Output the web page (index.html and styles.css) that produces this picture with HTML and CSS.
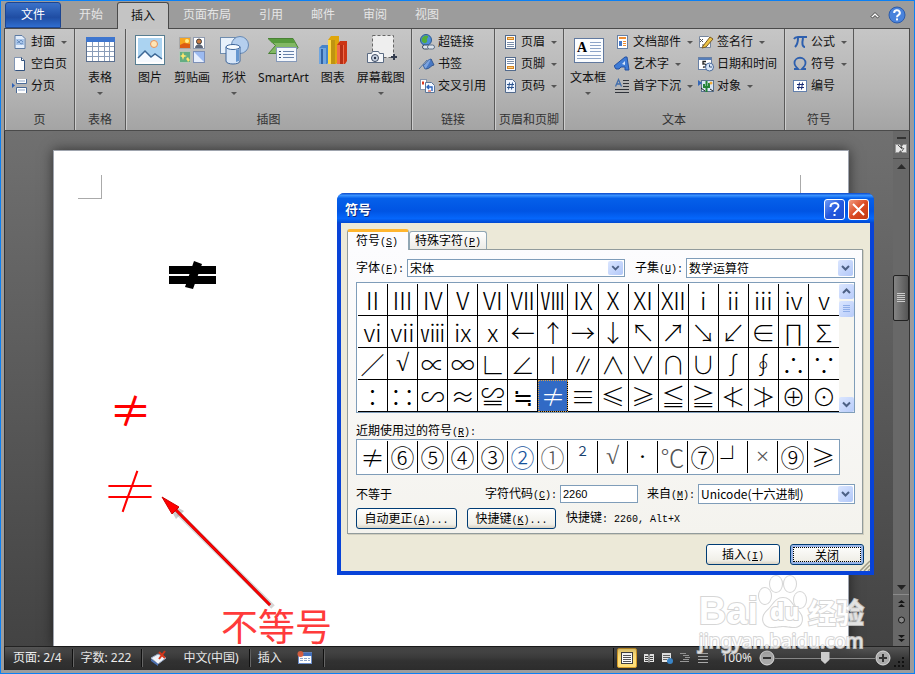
FILE: index.html
```html
<!DOCTYPE html>
<html lang="zh-CN">
<head>
    <meta charset="UTF-8">
    <title>插入符号</title>
    <link rel="stylesheet" href="styles.css">
</head>
<body>
    <div class="window">
        <nav class="tabs">
            <button type="button" class="tab file">文件</button>
            <button type="button" class="tab">开始</button>
            <button type="button" class="tab active">插入</button>
            <button type="button" class="tab">页面布局</button>
            <button type="button" class="tab">引用</button>
            <button type="button" class="tab">邮件</button>
            <button type="button" class="tab">审阅</button>
            <button type="button" class="tab">视图</button>
            <span class="spacer"></span>
            <button type="button" class="tool" aria-label="收起">
                <svg width="10" height="8" viewBox="0 0 10 8"><path d="M1 5.500 5 1.500 9 5.500 7.500 7 5 4.600 2.500 7z" fill="#fff" stroke="#444" stroke-width="1"/></svg>
            </button>
            <button type="button" class="tool" aria-label="帮助">
                <svg width="18" height="18" viewBox="0 0 18 18"><circle cx="9" cy="9" r="8" fill="#4a83dc" stroke="#2c5cab"/><path d="M6.200 7a2.800 2.600 0 1 1 4.200 2.100C9.400 9.700 9 10 9 11.200" fill="none" stroke="#fff" stroke-width="2"/><rect x="8" y="12.400" width="2" height="2" fill="#fff"/></svg>
            </button>
        </nav>

        <div class="ribbon">
            <section class="group pages">
                <div class="tools">
                    <div class="col">
                        <button type="button" class="item"><svg width="16" height="16" viewBox="0 0 16 16"><path d="M3 1.500h7l3 3v10H3z" fill="#e4eefb" stroke="#5d7ba3"/><rect x="4" y="5" width="8" height="6" fill="#a9c6ea"/><path d="M5 6l2 2 2-2 2 2M5 9l2-1 2 2 2-1" fill="none" stroke="#5b80b4" stroke-width=".8"/></svg>封面<i class="arrow"></i></button>
                        <button type="button" class="item"><svg width="16" height="16" viewBox="0 0 16 16"><path d="M2.500 1.500h7l3 3v10h-10z" fill="#fff" stroke="#8195b3"/><path d="M9.500 1.500v3h3v10h-9" fill="none" stroke="#33527d"/></svg>空白页</button>
                        <button type="button" class="item"><svg width="16" height="16" viewBox="0 0 16 16"><path d="M4.500 1v4.500h10V1M4.500 15V9.500h10V15" fill="#fff" stroke="#4b6b98"/><path d="M6 3h7M6 12h7" stroke="#91a9cb"/><path d="M0 5l3 2.500-3 2.500z" fill="#2d61b7"/></svg>分页</button>
                    </div>
                </div>
                <h2>页</h2>
            </section>
            <section class="group table">
                <div class="tools">
                    <button type="button" class="big"><svg width="32" height="32" viewBox="0 0 32 32"><rect x="2.500" y="3.500" width="28" height="24" fill="#fff" stroke="#5a6f8f"/><rect x="2" y="3" width="29" height="5" fill="#3e76cf"/><path d="M3 12.500h27M3 17.500h27M3 22.500h27M8.500 8v19M14.500 8v19M20.500 8v19M25.500 8v19" stroke="#8a9db9"/></svg><span>表格</span><i class="arrow"></i></button>
                </div>
                <h2>表格</h2>
            </section>
            <section class="group pictures">
                <div class="tools">
                    <button type="button" class="big"><svg width="32" height="32" viewBox="0 0 32 32"><rect x="1.500" y="1.500" width="29" height="29" fill="#fff" stroke="#577d91"/><rect x="4" y="4" width="24" height="24" fill="#abd3f1"/><circle cx="20" cy="10" r="3.500" fill="#ffe5b5" stroke="#e8915a"/><path d="M4 24l7-7 6 6 4-3 7 5v3H4z" fill="#f6faff"/><path d="M4 24l7-7 6 6 4-3 7 5" fill="none" stroke="#3c6795" stroke-width="1.500"/></svg><span>图片</span></button>
                    <button type="button" class="big"><svg width="32" height="32" viewBox="0 0 32 32"><rect x="3.500" y="3.500" width="11" height="11" fill="#f7a51e" stroke="#a8a8a8"/><path d="M4 11l4-2 6 1v4H4z" fill="#dc5c14"/><circle cx="11" cy="7" r="2" fill="#ffef8d"/><rect x="17.500" y="3.500" width="11" height="11" fill="#fff" stroke="#8f9bb0"/><circle cx="23" cy="7.500" r="2.500" fill="#c77a42" stroke="#3d3d3d"/><path d="M19 14c0-5 8-5 8 0z" fill="#5b6577"/><rect x="3.500" y="17.500" width="11" height="11" fill="#63ad82" stroke="#b3c7ba"/><path d="M7 18l1 3 3 1-3 1-1 3-1-3-2-1 2-1zM12 23l1 2 1 1-2 2-1-2-1-1z" fill="#ffe66e"/><rect x="17.500" y="17.500" width="11" height="11" fill="#9cbaf0" stroke="#7d90b7"/><path d="M18 18l10 10H18z" fill="#e7effd"/></svg><span>剪贴画</span></button>
                    <button type="button" class="big"><svg width="32" height="32" viewBox="0 0 32 32"><rect x="2.500" y="3.500" width="16" height="16" fill="#e8f1fb" stroke="#6f8cae"/><circle cx="22" cy="11" r="8.500" fill="#b5cfee" stroke="#6789b3"/><path d="M8 13v14c0 4 14 4 14 0V13z" fill="#d7e6f8" stroke="#3f679c"/><ellipse cx="15" cy="13" rx="7" ry="2.500" fill="#f8fcff" stroke="#3f679c"/><path d="M18 16v12l3-1V15z" fill="#6697d0"/></svg><span>形状</span><i class="arrow"></i></button>
                    <button type="button" class="big"><svg width="32" height="32" viewBox="0 0 32 32"><path d="M1 4.500h25l5 9-5 6H1.500l7-8z" fill="#82b864" stroke="#4a8235"/><path d="M2 5h24l2 4H5z" fill="#579b3d"/><rect x="9.500" y="13.500" width="20" height="14" fill="#f3f7fd" stroke="#8599b9"/><path d="M16 17.500h11M16 20.500h11M16 23.500h11" stroke="#6782aa"/><path d="M12 17.500h2M12 20.500h2M12 23.500h2" stroke="#344f79"/></svg><span>SmartArt</span></button>
                    <button type="button" class="big"><svg width="32" height="32" viewBox="0 0 32 32"><path d="M2 14l3-3h7v17l-2 2H2z" fill="#4684ca"/><path d="M2 14h7v16H2z" fill="#70a6df"/><path d="M4 15h2v15H4z" fill="#3263a3"/><path d="M11 6l3-4h8v25l-3 3h-8z" fill="#dfa60b"/><path d="M11 6h7v24h-7z" fill="#ffd946"/><path d="M14 6h4v24h-4z" fill="#bf9411"/><path d="M20 11l3-4h7v20l-2 3h-8z" fill="#cc3514"/><path d="M20 11h7v19h-7z" fill="#f06b49"/><path d="M23 11h3v19h-3z" fill="#b72e14"/></svg><span>图表</span></button>
                    <button type="button" class="big"><svg width="32" height="32" viewBox="0 0 32 32"><rect x="7.500" y="1.500" width="21" height="22" fill="#eee" stroke="#666" stroke-dasharray="3 2"/><path d="M26 23h6M29 20v6" stroke="#333b4d" stroke-width="2"/><path d="M2.500 19.500h4l1-2h6l1 2h4v9h-16z" fill="#f5f7fa" stroke="#5b6b83"/><circle cx="10" cy="24" r="3.500" fill="#c9d4e3" stroke="#3d4a61"/><circle cx="10" cy="24" r="1.200" fill="#273247"/></svg><span>屏幕截图</span><i class="arrow"></i></button>
                </div>
                <h2>插图</h2>
            </section>
            <section class="group links">
                <div class="tools">
                    <div class="col">
                        <button type="button" class="item"><svg width="16" height="16" viewBox="0 0 16 16"><circle cx="7" cy="6" r="5.500" fill="#4b8edc" stroke="#2e5a91"/><path d="M3 4c2-3 5-3 6-2s-2 3-1 4-1 4-3 3-3-2-2-5z" fill="#54ad3a"/><rect x="3.500" y="11" width="7" height="4" rx="2" fill="#dde4ec" stroke="#37485e"/><rect x="8.500" y="11" width="7" height="4" rx="2" fill="#dde4ec" stroke="#5c7087"/></svg>超链接</button>
                        <button type="button" class="item"><svg width="16" height="16" viewBox="0 0 16 16"><path d="M0 13L8 4" stroke="#58759d"/><path d="M4 9c3 0 3-5 8-6v5c-4 1-3 5-6 5z" fill="#7ba3e0" stroke="#3c65a3"/><path d="M12 3l3 6c-3 0-4 4-8 4" fill="#4778c4" stroke="#35578c"/></svg>书签</button>
                        <button type="button" class="item"><svg width="16" height="16" viewBox="0 0 16 16"><rect x="1.500" y="1.500" width="6" height="10" fill="#fff" stroke="#8695ac"/><path d="M3 3.500h2v3H3z" fill="#dc3b22"/><path d="M6.500 4.500h6l3 3v7h-9z" fill="#f3f8ff" stroke="#5b7699"/><path d="M13 13V9H8m2-2L8 9l2 2" fill="none" stroke="#2862bd" stroke-width="1.400"/><path d="M9 13h3" stroke="#dc3b22"/></svg>交叉引用</button>
                    </div>
                </div>
                <h2>链接</h2>
            </section>
            <section class="group header-footer">
                <div class="tools">
                    <div class="col">
                        <button type="button" class="item"><svg width="16" height="16" viewBox="0 0 16 16"><rect x="3.500" y="1.500" width="10" height="13" fill="#fff" stroke="#526a8c"/><rect x="5.500" y="3.500" width="6" height="2" fill="#f6cd87" stroke="#d78724"/><path d="M5 8.500h7M5 10.500h7M5 12.500h7" stroke="#7b8eaa"/></svg>页眉<i class="arrow"></i></button>
                        <button type="button" class="item"><svg width="16" height="16" viewBox="0 0 16 16"><rect x="3.500" y="1.500" width="10" height="13" fill="#fff" stroke="#526a8c"/><rect x="5.500" y="10.500" width="6" height="2" fill="#f6cd87" stroke="#d78724"/><path d="M5 3.500h7M5 5.500h7M5 7.500h7" stroke="#7b8eaa"/></svg>页脚<i class="arrow"></i></button>
                        <button type="button" class="item"><svg width="16" height="16" viewBox="0 0 16 16"><path d="M3.500 1.500h7l3 3v10h-10z" fill="#eff5ff" stroke="#526a8c"/><path d="M7.500 4.500l-1 7M10.500 4.500l-1 7M5 6.500h7M5 9.500h7" stroke="#2b548f"/></svg>页码<i class="arrow"></i></button>
                    </div>
                </div>
                <h2>页眉和页脚</h2>
            </section>
            <section class="group text">
                <div class="tools">
                    <button type="button" class="big"><svg width="32" height="32" viewBox="0 0 32 32"><rect x="2.500" y="4.500" width="29" height="24" fill="#fbfdff" stroke="#61799f"/><text x="5" y="18" class="icon-a">A</text><path d="M18 8.500h11M18 11.500h11M18 14.500h11M18 17.500h11M5 21.500h24M5 24.500h24" stroke="#8ea5c8"/></svg><span>文本框</span><i class="arrow"></i></button>
                    <div class="col">
                        <button type="button" class="item"><svg width="16" height="16" viewBox="0 0 16 16"><rect x="3.500" y="1.500" width="10" height="13" fill="#fff" stroke="#6680a6"/><rect x="5" y="3" width="7" height="2" fill="#ee8d33"/><path d="M5 7h3v5H5z" fill="#4578c8"/><path d="M9 7.500h3M9 9.500h3M9 11.500h3" stroke="#ee8d33"/></svg>文档部件<i class="arrow"></i></button>
                        <button type="button" class="item"><svg width="16" height="16" viewBox="0 0 16 16"><path d="M0 10L11 1h2l2 13h-4v-3H7l-2 2H2z" fill="#3e7bd6" stroke="#2450a0"/><path d="M8 8l3-3v4z" fill="#d8e6fa"/></svg>艺术字<i class="arrow"></i></button>
                        <button type="button" class="item"><svg width="16" height="16" viewBox="0 0 16 16"><path d="M1.500 8.500L4.500 1.500l3 7M2.500 6h4" fill="none" stroke="#426eac" stroke-width="1.300"/><path d="M9 2.500h6M9 5.500h6M9 8.500h6M1 11.500h14M1 14.500h14" stroke="#30343b"/></svg>首字下沉<i class="arrow"></i></button>
                    </div>
                    <div class="col">
                        <button type="button" class="item"><svg width="16" height="16" viewBox="0 0 16 16"><path d="M1.500 2.500h9l2 2v9h-11z" fill="#fff" stroke="#76869e"/><path d="M2 5l3 3M5 5L2 8M4 11h6" stroke="#555"/><path d="M5 12l7-9 3 2-7 8-4 1z" fill="#eec445" stroke="#7b5b23"/></svg>签名行<i class="arrow"></i></button>
                        <button type="button" class="item"><svg width="16" height="16" viewBox="0 0 16 16"><rect x=".5" y="1.500" width="13" height="12" fill="#fff" stroke="#6880a5"/><path d="M1 2h12v2H1z" fill="#567eb9"/><path d="M8 5.500H5v2.500c4-1 4 4 0 3" fill="none" stroke="#222" stroke-width="1.300"/><circle cx="11.500" cy="11" r="4" fill="#dbe7f7" stroke="#4a6b9b"/><path d="M11.500 8.500V11H14" fill="none" stroke="#35517a"/></svg>日期和时间</button>
                        <button type="button" class="item"><svg width="16" height="16" viewBox="0 0 16 16"><rect x="3.500" y="2.500" width="12" height="11" fill="#d9e6f5" stroke="#5b738f"/><path d="M0 2l4 3-4 3z" fill="#3467b7"/><path d="M8.500 3v11M6 6v3h5V5" fill="none" stroke="#238437" stroke-width="2"/><circle cx="13" cy="5" r="1.500" fill="#f1aa35"/><path d="M3 10l4 3M12 11l3 2" stroke="#222"/></svg>对象<i class="arrow"></i></button>
                    </div>
                </div>
                <h2>文本</h2>
            </section>
            <section class="group symbols">
                <div class="tools">
                    <div class="col">
                        <button type="button" class="item"><svg width="16" height="16" viewBox="0 0 16 16"><path d="M2 5c1-2 2-2 4-2h9M6 4c0 5-1 7-3 9M11 4c-1 5-1 9 2 9" fill="none" stroke="#2d5fae" stroke-width="2"/></svg>公式<i class="arrow"></i></button>
                        <button type="button" class="item"><svg width="16" height="16" viewBox="0 0 16 16"><path d="M2 13h4c-3-3-3.500-4-3.500-6 0-7 11-7 11 0 0 2-.5 3-3.500 6h4" fill="none" stroke="#2d5fae" stroke-width="1.800"/></svg>符号<i class="arrow"></i></button>
                        <button type="button" class="item"><svg width="16" height="16" viewBox="0 0 16 16"><rect x="1.500" y="2.500" width="13" height="11" fill="#fff" stroke="#6380ad"/><path d="M7.500 4.500l-1 7M10.500 4.500l-1 7M5 6.500h7M5 9.500h7" stroke="#182b75"/></svg>编号</button>
                    </div>
                </div>
                <h2>符号</h2>
            </section>
        </div>

        <main class="workspace">
            <div class="canvas">
                <article class="page">
                    <span class="crop left"></span>
                    <span class="crop right"></span>
                    <svg class="shape" width="48" height="30" viewBox="0 0 48 30"><path d="M0 5h47v8H0zM0 15h47v8H0zM25 0l8 3-9 25-8-2z"/></svg>
                    <p class="medium">≠</p>
                    <p class="large">≠</p>
                    <svg class="pointer" width="120" height="122" viewBox="0 0 120 122">
                        <path d="M16 16L111 110" stroke="#bbb" stroke-width="5" opacity=".6"/>
                        <path d="M4 4L14 22 22 14z" fill="#999" opacity=".5"/>
                        <path d="M12 11L108 108" stroke="#b00000" stroke-width="3"/>
                        <path d="M12 11L108 108" stroke="#ff0000" stroke-width="2"/>
                        <path d="M0 0L17 10 10 17z" fill="#f00" stroke="#c00" stroke-width="1"/>
                    </svg>
                    <div class="note">不等号</div>
                </article>
            </div>
            <div class="scroll">
                <svg width="16" height="52" viewBox="0 0 16 52"><rect x="4" y="6" width="9" height="2" fill="#333"/><path d="M2.500 13.500h4l2 2 2-2h3v8h-4l-2-2-2 2h-3z" fill="#e6e6e6" stroke="#999"/><path d="M5 14l3 3M9 20l2-3M7 16h2v2" stroke="#555"/><path d="M0 27.500h16" stroke="#4c4c4c"/><path d="M4 38h9l-4.500-5z" fill="#2a2a2a"/></svg>
                <span class="thumb"></span>
                <svg width="16" height="68" viewBox="0 0 16 68"><path d="M4 7h9l-4.500 5z" fill="#222"/><path d="M0 16.500h16" stroke="#8a8a8a"/><path d="M5 25l3.500-3 3.500 3zM5 29l3.500-3 3.500 3zM5 57h7l-3.500 3zM5 61h7l-3.500 3z" fill="#161616"/><circle cx="8.500" cy="42" r="3" fill="#888" stroke="#161616"/></svg>
            </div>
        </main>

        <footer class="status">
            <span class="cell">页面: 2/4</span>
            <span class="cell">字数: 222</span>
            <span class="cell"><svg width="18" height="16" viewBox="0 0 18 16"><path d="M1 8l7-4 8 4-8 6z" fill="#f4f7fd" stroke="#9cacc9"/><path d="M1 9l7 5v2L1 11z" fill="#4c73b8"/><path d="M9 2l6 6M15 1L9 9" stroke="#e03a1c" stroke-width="2"/></svg><span class="lang">中文(中国)</span></span>
            <span class="cell">插入<svg class="macro" width="16" height="16" viewBox="0 0 16 16"><rect x="1.500" y="2.500" width="13" height="11" fill="#fff" stroke="#6a8cc9"/><path d="M1 3h14v3H1z" fill="#4675c4"/><path d="M3 8.500h10M3 10.500h10" stroke="#8da5cb" stroke-dasharray="3 1"/><circle cx="3.500" cy="4" r="3" fill="#e06444"/></svg></span>
            <span class="spacer"></span>
            <span class="views">
                <button type="button" class="view on" aria-label="页面视图"><svg width="14" height="14" viewBox="0 0 14 14"><rect x="1.500" y="1.500" width="11" height="11" fill="#fff" stroke="#404040"/><path d="M3 4.500h8M3 6.500h8M3 8.500h8M3 10.500h8" stroke="#555"/></svg></button>
                <button type="button" class="view" aria-label="阅读版式"><svg width="12" height="12" viewBox="0 0 12 12"><path d="M1 2h4l1 1 1-1h4v8H7l-1 1-1-1H1z" fill="#e8e8e8"/><path d="M6 2v9M2 4.500h3M7 4.500h3M2 6.500h3M7 6.500h3M2 8.500h3M7 8.500h3" stroke="#444"/></svg></button>
                <button type="button" class="view" aria-label="Web 版式"><svg width="12" height="12" viewBox="0 0 12 12"><rect x="1" y="1" width="9" height="9" fill="#e8e8e8"/><path d="M2 3.500h7M2 5.500h7M2 7.500h4" stroke="#666"/><circle cx="9" cy="9" r="3" fill="#3b86c9"/></svg></button>
                <button type="button" class="view" aria-label="大纲视图"><svg width="12" height="12" viewBox="0 0 12 12"><path d="M1 1.500h6M4 3.500h6M6 5.500h5M4 7.500h6M1 9.500h9" stroke="#999"/></svg></button>
                <button type="button" class="view" aria-label="草稿"><svg width="12" height="12" viewBox="0 0 12 12"><path d="M1 1.500h10M1 4.500h10M1 7.500h10M1 10.500h10" stroke="#aaa"/></svg></button>
            </span>
            <span class="percent">100%</span>
            <button type="button" class="zoom-btn" aria-label="缩小"><svg width="16" height="16" viewBox="0 0 16 16"><circle cx="8" cy="8" r="7" fill="#aaa" stroke="#ddd"/><path d="M4 8h8" stroke="#333" stroke-width="2"/></svg></button>
            <input type="range" class="zoom" aria-label="显示比例" min="0" max="200" value="100">
            <button type="button" class="zoom-btn" aria-label="放大"><svg width="16" height="16" viewBox="0 0 16 16"><circle cx="8" cy="8" r="7" fill="#aaa" stroke="#ddd"/><path d="M4 8h8M8 4v8" stroke="#333" stroke-width="2"/></svg></button>
            <svg class="grip" width="12" height="12" viewBox="0 0 12 12"><path d="M9 0h2v2H9zM9 4h2v2H9zM5 4h2v2H5zM9 8h2v2H9zM5 8h2v2H5zM1 8h2v2H1z" fill="#111"/></svg>
        </footer>

        <div class="dialog" role="dialog" aria-labelledby="title">
            <header class="titlebar">
                <h1 id="title">符号</h1>
                <button type="button" class="cap help" aria-label="帮助"><svg width="13" height="15" viewBox="0 0 13 15"><path d="M2.500 5c0-5 8-5 8-1 0 3-4 2.500-4 6" fill="none" stroke="#fff" stroke-width="2"/><path d="M5.500 12h2v2h-2z" fill="#fff"/></svg></button>
                <button type="button" class="cap close" aria-label="关闭窗口"><svg width="13" height="13" viewBox="0 0 13 13"><path d="M1 1l11 11M12 1L1 12" stroke="#fff" stroke-width="2"/></svg></button>
            </header>
            <div class="body">
                <div class="dtabs">
                    <button type="button" class="dtab on">符号<span class="latin">(<u>S</u>)</span></button>
                    <button type="button" class="dtab">特殊字符<span class="latin">(<u>P</u>)</span></button>
                </div>
                <div class="panel">
                    <div class="row">
                        <label for="font">字体<span class="latin">(<u>F</u>):</span></label>
                        <span class="combo font">
                            <select id="font"><option>宋体</option></select>
                            <svg class="drop" width="15" height="15" viewBox="0 0 15 15"><path d="M4 5.500l3.500 3.500L11 5.500" fill="none" stroke="#4d6185" stroke-width="2"/></svg>
                        </span>
                        <label for="subset" class="second">子集<span class="latin">(<u>U</u>):</span></label>
                        <span class="combo subset">
                            <select id="subset"><option>数学运算符</option></select>
                            <svg class="drop" width="15" height="15" viewBox="0 0 15 15"><path d="M4 5.500l3.500 3.500L11 5.500" fill="none" stroke="#4d6185" stroke-width="2"/></svg>
                        </span>
                    </div>
                    <div class="glyphs">
                        <div class="grid">
                            <span>Ⅱ</span><span>Ⅲ</span><span>Ⅳ</span><span>Ⅴ</span><span>Ⅵ</span><span>Ⅶ</span><span>Ⅷ</span><span>Ⅸ</span><span>Ⅹ</span><span>Ⅺ</span><span>Ⅻ</span><span>ⅰ</span><span>ⅱ</span><span>ⅲ</span><span>ⅳ</span><span>ⅴ</span>
                            <span>ⅵ</span><span>ⅶ</span><span>ⅷ</span><span>ⅸ</span><span>ⅹ</span><span>←</span><span>↑</span><span>→</span><span>↓</span><span>↖</span><span>↗</span><span>↘</span><span>↙</span><span>∈</span><span>∏</span><span>∑</span>
                            <span>∕</span><span class="serif">√</span><span>∝</span><span>∞</span><span>∟</span><span>∠</span><span>∣</span><span>∥</span><span>∧</span><span>∨</span><span>∩</span><span>∪</span><span>∫</span><span>∮</span><span>∴</span><span>∵</span>
                            <span>∶</span><span>∷</span><span>∽</span><span>≈</span><span>≌</span><span>≒</span><span class="picked">≠</span><span>≡</span><span>≤</span><span>≥</span><span>≦</span><span>≧</span><span>≮</span><span>≯</span><span>⊕</span><span>⊙</span>
                        </div>
                        <div class="bar">
                            <svg class="knob" width="15" height="15" viewBox="0 0 15 15"><path d="M4 9l3.500-3.500L11 9" fill="none" stroke="#4d6185" stroke-width="2"/></svg>
                            <svg class="knob" width="15" height="16" viewBox="0 0 15 16"><path d="M4 4.500h7M4 6.500h7M4 8.500h7M4 10.500h7" stroke="#90aee8"/></svg>
                            <span class="spacer"></span>
                            <svg class="knob" width="15" height="15" viewBox="0 0 15 15"><path d="M4 5.500l3.500 3.500L11 5.500" fill="none" stroke="#4d6185" stroke-width="2"/></svg>
                        </div>
                    </div>
                    <div class="caption">近期使用过的符号<span class="latin">(<u>R</u>):</span></div>
                    <div class="recent">
                        <span>≠</span><span>⑥</span><span>⑤</span><span>④</span><span>③</span><span class="blue">②</span><span class="soft">①</span><span class="sup">²</span><span class="soft serif">√</span><span class="serif">·</span><span class="soft">℃</span><span>⑦</span><span>┘</span><span class="soft serif">×</span><span>⑨</span><span>≥</span>
                    </div>
                    <div class="row code">
                        <span class="name">不等于</span>
                        <label for="code">字符代码<span class="latin">(<u>C</u>):</span></label>
                        <input type="text" id="code" class="code-input" value="2260">
                        <label for="from" class="from">来自<span class="latin">(<u>M</u>):</span></label>
                        <span class="combo source">
                            <select id="from"><option>Unicode(十六进制)</option></select>
                            <svg class="drop" width="15" height="15" viewBox="0 0 15 15"><path d="M4 5.500l3.500 3.500L11 5.500" fill="none" stroke="#4d6185" stroke-width="2"/></svg>
                        </span>
                    </div>
                    <div class="row keys">
                        <button type="button" class="btn auto">自动更正<span class="latin">(<u>A</u>)...</span></button>
                        <button type="button" class="btn hot">快捷键<span class="latin">(<u>K</u>)...</span></button>
                        <span>快捷键<span class="latin">: 2260, Alt+X</span></span>
                    </div>
                </div>
                <div class="actions">
                    <button type="button" class="btn">插入<span class="latin">(<u>I</u>)</span></button>
                    <button type="button" class="btn default">关闭</button>
                </div>
            </div>
            <svg class="resize" width="12" height="12" viewBox="0 0 12 12"><path d="M2 12L12 2M6 12l6-6M10 12l2-2" stroke="#9d9a86" stroke-width="1.500"/></svg>
        </div>

        <div class="watermark">
            <div class="brand"><span class="bai">Bai</span><span class="paw"><svg width="50" height="54" viewBox="0 0 50 54"><path d="M25 23c8 0 9 8 15 13 7 7 4 16-4 16-5 0-7-1-11-1s-6 1-11 1c-9 0-12-9-5-16 6-5 8-13 16-13z"/><ellipse cx="18" cy="9" rx="6" ry="8"/><ellipse cx="32" cy="9" rx="6" ry="8"/><ellipse cx="7" cy="21" rx="6" ry="8"/><ellipse cx="42" cy="25" rx="6" ry="8"/></svg><b>du</b></span><span class="jy">经验</span></div>
            <div class="url">jingyan.baidu.com</div>
        </div>
    </div>
</body>
</html>
```

FILE: styles.css
```css
* {
    margin: 0;
    padding: 0;
    box-sizing: border-box;
}

body {
    font-family: "Noto Sans", "Noto Sans CJK SC", sans-serif;
    font-size: 12px;
    line-height: 16px;
    color: #111;
}

button {
    font: inherit;
    color: inherit;
    background: none;
    border: none;
    white-space: nowrap;
}

svg {
    display: block;
    flex: none;
}

.spacer {
    flex: 1;
}

.window {
    position: relative;
    display: flex;
    flex-direction: column;
    height: 100vh;
    min-height: 640px;
    overflow: hidden;
    padding: 0 4px 3px 3px;
    border: 1px solid #0a80f5;
    background: #9c9c9c;
}

/* tabs */
.tabs {
    display: flex;
    height: 27px;
    padding: 1px 0 0 1px;
}

.tab {
    padding: 0 14px;
    color: #e6e6e6;
}

.tab.file {
    margin-right: 4px;
    padding: 0 15px;
    border: 1px solid #1c4591;
    border-radius: 3px 3px 0 0;
    color: #fff;
    background: linear-gradient(#3b72c9, #1f4da3 60%, #2f6ed0);
}

.tab.active {
    color: #111;
    border: 1px solid #4a4a4a;
    border-bottom: none;
    border-radius: 3px 3px 0 0;
    padding: 0 13px;
    background: #c4c4c4;
    margin-bottom: -1px;
    z-index: 1;
}

.tool {
    padding: 0 4px;
}

/* ribbon */
.ribbon {
    display: flex;
    height: 103px;
    border: 1px solid #4a4a4a;
    background: linear-gradient(#c6c6c6, #b4b4b4 60%, #a4a4a4);
}

.group {
    display: flex;
    flex-direction: column;
    flex: none;
    border-right: 1px solid #5a5a5a;
    box-shadow: inset 1px 0 #cdcdcd;
}

.tools {
    display: flex;
    flex: 1;
    padding-top: 2px;
}

.group h2 {
    height: 18px;
    font-size: 12px;
    font-weight: normal;
    line-height: 16px;
    text-align: center;
    color: #333;
}

.pages { width: 70px; }
.table { width: 51px; }
.pictures { width: 286px; }
.links { width: 83px; }
.header-footer { width: 69px; }
.text { width: 221px; }
.symbols { width: 69px; }

.pages .tools,
.links .tools,
.header-footer .tools,
.symbols .tools {
    padding-left: 7px;
}

.table .tools {
    justify-content: center;
}

.pictures .tools {
    padding-left: 6px;
}

.text .col {
    margin-left: 2px;
}

.text .col + .col {
    margin-left: 5px;
}

.item {
    display: flex;
    align-items: center;
    gap: 3px;
    height: 22px;
}

.arrow {
    margin-left: 3px;
    border: 3px solid transparent;
    border-top-color: #555;
    border-bottom: none;
}

.big {
    display: flex;
    flex-direction: column;
    align-items: center;
    height: 72px;
    padding-top: 3px;
}

.big span {
    padding: 0 6px;
    margin: 4px 0 6px;
}

.big .arrow {
    margin: 0;
}

.icon-a {
    font: bold 14px "Liberation Serif", serif;
}

/* document */
.workspace {
    display: flex;
    flex: 1;
    min-height: 0;
    border: 1px solid #333;
    border-width: 0 1px;
    background: linear-gradient(#707070, #434343);
}

.canvas {
    display: flex;
    flex: 1;
    padding: 19px 44px 0 48px;
}

.page {
    position: relative;
    flex: 1;
    padding: 110px 0 0 55px;
    border: 1px solid #9fa4ae;
    border-bottom: none;
    background: #fff;
    box-shadow: 0 0 12px #0000008c;
    color: #f00;
}

.crop {
    position: absolute;
    top: 24px;
    width: 24px;
    height: 24px;
    border-bottom: 1px solid #aaa;
}

.crop.left {
    left: 24px;
    border-right: 1px solid #aaa;
}

.crop.right {
    right: 24px;
    border-left: 1px solid #aaa;
}

.shape {
    margin-left: 60px;
}

.medium,
.large {
    font-family: "Noto Sans CJK SC", sans-serif;
}

.medium {
    margin-top: 96px;
    font-size: 43px;
    line-height: 42px;
    font-weight: 400;
}

.large {
    margin: 34px 0 0 -8px;
    font-size: 58px;
    line-height: 50px;
    font-weight: 100;
}

.pointer {
    position: absolute;
    left: 108px;
    top: 346px;
    overflow: visible;
}

.note {
    position: absolute;
    left: 167px;
    top: 454px;
    font: 400 37px/40px "Noto Sans CJK SC", sans-serif;
    color: #ff3b3b;
}

.scroll {
    display: flex;
    flex-direction: column;
    justify-content: space-between;
    width: 16px;
    background: #686868;
}

.thumb {
    height: 46px;
    margin-bottom: 166px;
    border: 1px solid #222;
    border-radius: 2px;
    background:
        repeating-linear-gradient(#ccc 0 1px, transparent 1px 2px) center / 8px 9px no-repeat,
        linear-gradient(90deg, #858585, #555);
}

/* status bar */
.status {
    display: flex;
    align-items: center;
    height: 24px;
    padding: 0 4px 1px 8px;
    border: 1px solid #222;
    border-bottom: none;
    background: linear-gradient(#555, #333 60%, #2c2c2c);
    color: #eee;
}

.cell {
    display: flex;
    align-items: center;
    height: 18px;
    padding-right: 10px;
    margin-right: 8px;
    border-right: 1px solid #111;
    box-shadow: 1px 0 #666;
}

.lang {
    margin-left: 15px;
}

.macro {
    margin-left: 15px;
}

.views {
    display: flex;
    align-items: center;
    gap: 6px;
    padding-left: 3px;
    border-left: 1px solid #111;
}

.view.on {
    padding: 2px;
    border: 1px solid #d69c28;
    border-radius: 2px;
    background: #ffdf7a;
}

.percent {
    margin: 0 7px 0 12px;
}

.zoom {
    width: 100px;
    height: 16px;
    appearance: none;
    background: linear-gradient(#888, #888) center / 100% 1px no-repeat;
}

.zoom::-webkit-slider-thumb {
    appearance: none;
    width: 9px;
    height: 12px;
    background: #ccc;
    clip-path: polygon(0 0, 100% 0, 100% 65%, 50% 100%, 0 65%);
}

.grip {
    margin-left: 2px;
    align-self: flex-end;
}

/* dialog */
.dialog {
    position: absolute;
    left: 336px;
    top: 192px;
    width: 537px;
    border: 4px solid #0843d8;
    border-top: none;
    border-radius: 8px 8px 0 0;
    background: #ece9d8;
    font-family: "Noto Sans CJK SC", sans-serif;
    color: #000;
}

.latin {
    font-family: "Liberation Mono", monospace;
    font-size: 10px;
}

.titlebar {
    display: flex;
    align-items: center;
    gap: 3px;
    height: 30px;
    margin: 0 -4px;
    padding: 2px 5px 0 8px;
    border-radius: 7px 7px 0 0;
    background: linear-gradient(#0a46c8, #3a93ff 8%, #0560ea 18%, #0054e3 60%, #0566fb 85%, #0148d0);
}

.titlebar h1 {
    flex: 1;
    font-size: 13px;
    color: #fff;
    text-shadow: 1px 1px #0a2a80;
}

.cap {
    display: grid;
    place-items: center;
    width: 21px;
    height: 21px;
    border: 1px solid #fff;
    border-radius: 3px;
    background: linear-gradient(135deg, #6f9cf5, #2458de 50%, #1e4fd0);
}

.cap.close {
    background: linear-gradient(135deg, #f09a80, #dc4a22 50%, #c03a14);
}

.body {
    padding: 6px;
}

.dtabs {
    display: flex;
    align-items: flex-end;
    height: 20px;
}

.dtab {
    height: 18px;
    padding: 0 5px;
    border: 1px solid #91a7b4;
    border-bottom: none;
    border-radius: 3px 3px 0 0;
    background: linear-gradient(#fff, #ecebe6);
    line-height: 16px;
}

.dtab.on {
    height: 21px;
    padding: 0 10px 0 8px;
    margin-bottom: -1px;
    border-top: 3px solid #ffb62e;
    border-left-color: #919b9c;
    background: #fcfcfe;
    z-index: 1;
}

.panel {
    margin-right: 1px;
    padding: 8px 7px 4px 8px;
    border: 1px solid #919b9c;
    background: linear-gradient(#fcfcfe, #f4f3ee);
    box-shadow: 1px 1px #d0cebf;
}

.row {
    display: flex;
    align-items: center;
    height: 20px;
}

.row label {
    width: 51px;
    white-space: nowrap;
}

.row .second {
    margin-left: 10px;
}

.combo {
    position: relative;
    display: flex;
    height: 20px;
}

.combo.font {
    width: 218px;
    height: 18px;
}

.combo.subset,
.combo.source {
    flex: 1;
}

.combo select {
    width: 100%;
    appearance: none;
    padding: 0 20px 0 2px;
    border: 1px solid #7f9db9;
    background: #fff;
    font: inherit;
    color: #000;
}

.drop {
    position: absolute;
    right: 2px;
    top: 2px;
    height: calc(100% - 4px);
    border-radius: 2px;
    background: linear-gradient(135deg, #dbe6ff, #b1c7f8);
    pointer-events: none;
}

.glyphs {
    display: flex;
    margin-top: 4px;
    padding: 1px 0 0 1px;
    border: 1px solid #7f9db9;
    background: #fff;
}

.grid {
    display: grid;
    flex: 1;
    grid-template-columns: repeat(16, minmax(0, 1fr));
    grid-auto-rows: 32px;
}

.grid span,
.recent span {
    border-right: 1px solid #000;
    font-family: "Noto Sans CJK SC", "Noto Sans CJK JP", sans-serif;
    font-size: 24px;
    font-weight: 300;
    line-height: 31px;
    text-align: center;
}

.grid span {
    border-bottom: 1px solid #000;
}

.grid .serif,
.recent .serif {
    font-family: "Liberation Serif", serif;
}

.grid span:nth-child(16n),
.recent span:last-child {
    border-right: none;
}

.grid .picked {
    background: #316ac5;
    color: #fff;
    outline: 1px dotted #d9a04a;
    outline-offset: -1px;
}

.bar {
    display: flex;
    flex-direction: column;
    gap: 2px;
    background: #f6f5f0;
}

.knob {
    border-radius: 2px;
    background: linear-gradient(135deg, #dbe6ff, #b8ccfa);
}

.caption {
    margin-top: 9px;
    height: 17px;
}

.recent {
    display: grid;
    grid-template-columns: repeat(16, minmax(0, 1fr));
    height: 36px;
    margin-right: 15px;
    padding: 1px;
    border: 1px solid #7f9db9;
    background: #fff;
}

.recent .blue {
    color: #16539b;
}

.recent .soft {
    color: #555;
}

.recent .sup {
    color: #16406f;
}

.code {
    margin-top: 9px;
}

.code .name {
    width: 129px;
}

.row label[for="code"] {
    width: 75px;
}

.code-input {
    width: 78px;
    height: 18px;
    padding: 0 2px;
    border: 1px solid #7f9db9;
    font: 11px "Liberation Sans", sans-serif;
}

.from {
    margin-left: 9px;
}

.keys {
    gap: 10px;
    height: 22px;
    margin-top: 3px;
}

.btn {
    height: 21px;
    width: 74px;
    border: 1px solid #003c74;
    border-radius: 3px;
    background: linear-gradient(#fff, #f0efe8 80%, #d8d2c4);
    line-height: 18px;
}

.btn.auto { width: 101px; }
.btn.hot { width: 89px; }

.btn.default {
    box-shadow: inset 0 0 0 2px #98b4e8;
    outline: 1px dotted #000;
    outline-offset: -4px;
}

.actions {
    display: flex;
    justify-content: flex-end;
    gap: 10px;
    margin-top: 10px;
}

.resize {
    position: absolute;
    right: 0;
    bottom: 0;
}

/* watermark */
.watermark {
    position: absolute;
    right: 50px;
    bottom: 20px;
    color: #fff;
    -webkit-text-stroke: 2px #cfcfcf;
    paint-order: stroke;
    opacity: .85;
}

.brand {
    display: flex;
    align-items: flex-end;
    height: 52px;
    font-weight: bold;
}

.bai {
    font-size: 38px;
    line-height: 36px;
    font-family: "Liberation Sans", sans-serif;
}

.paw {
    position: relative;
}

.paw svg {
    fill: #fff;
    stroke: #cfcfcf;
    stroke-width: 2px;
}

.paw b {
    position: absolute;
    left: 12px;
    bottom: 6px;
    font-size: 22px;
    line-height: 24px;
}

.jy {
    font-size: 28px;
    line-height: 32px;
}

.url {
    font-size: 19px;
    line-height: 24px;
}
```
